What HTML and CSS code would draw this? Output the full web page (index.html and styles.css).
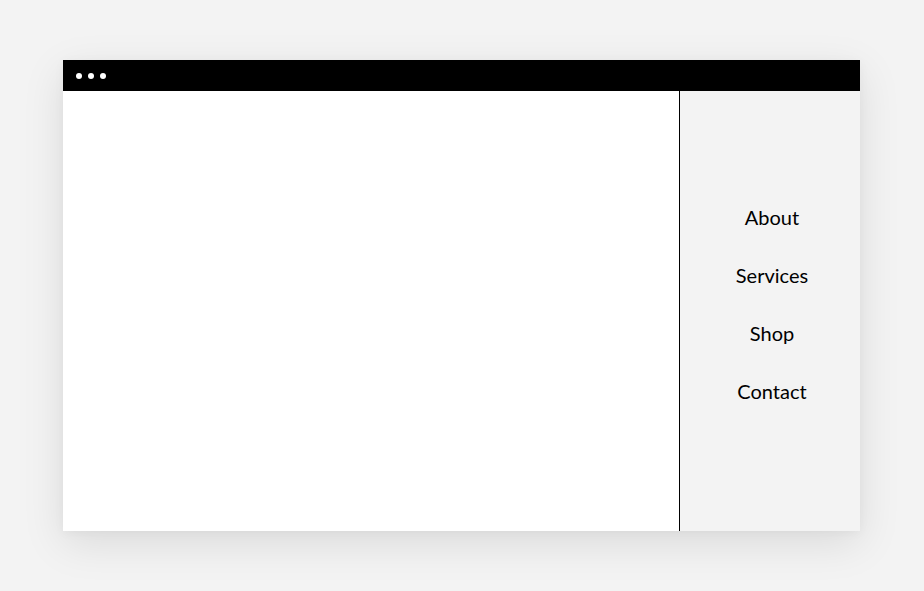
FILE: index.html
```html
<!DOCTYPE html>
<html>
<head>
<meta charset="utf-8">
<link rel="stylesheet" href="styles.css">
</head>
<body>
<div class="window">
  <div class="titlebar">
    <span class="dot"></span><span class="dot"></span><span class="dot"></span>
  </div>
  <div class="content">
    <div class="main"></div>
    <nav class="sidebar">
      <a class="nav-item">About</a>
      <a class="nav-item">Services</a>
      <a class="nav-item">Shop</a>
      <a class="nav-item">Contact</a>
    </nav>
  </div>
</div>
</body>
</html>
```
FILE: styles.css
```css
html, body {
  margin: 0;
  padding: 0;
  background: #f3f3f3;
  width: 924px;
  height: 591px;
  overflow: hidden;
}
body {
  padding-top: 60px;
  padding-left: 63px;
  box-sizing: border-box;
}
.window {
  width: 797px;
  height: 471px;
  display: flex;
  flex-direction: column;
  box-shadow: 0 12px 40px rgba(0, 0, 0, 0.10), 0 2px 10px rgba(0,0,0,0.04);
}
.titlebar {
  height: 31px;
  background: #000;
  display: flex;
  align-items: center;
  padding-left: 13px;
  gap: 6px;
}
.dot {
  width: 6px;
  height: 6px;
  border-radius: 50%;
  background: #fff;
}
.content {
  flex: 1;
  display: flex;
}
.main {
  flex: 1;
  background: #fff;
  border-right: 1px solid #000;
}
.sidebar {
  width: 180px;
  box-sizing: border-box;
  background: #f3f3f3;
  display: flex;
  flex-direction: column;
  align-items: center;
  padding-top: 97px;
  padding-left: 4px;
  font-family: "Lato", sans-serif;
  font-size: 20px;
  color: #000;
}
.nav-item {
  height: 58px;
  line-height: 58px;
  text-align: center;
}
```
